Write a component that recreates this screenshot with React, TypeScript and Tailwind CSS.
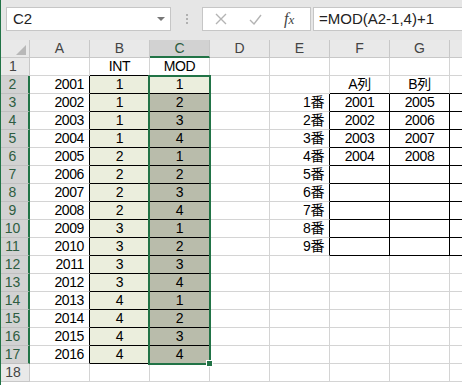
const COLS = ["A", "B", "C", "D", "E", "F", "G", "H"];
const ROWS = Array.from({ length: 18 }, (_, i) => i + 1);

function cellValue(col: string, r: number): string {
  if (col === "A" && r >= 2 && r <= 17) return String(1999 + r);
  if (col === "B") {
    if (r === 1) return "INT";
    if (r >= 2 && r <= 17) return String(Math.floor((r - 2) / 4) + 1);
  }
  if (col === "C") {
    if (r === 1) return "MOD";
    if (r >= 2 && r <= 17) return String(((r - 2) % 4) + 1);
  }
  if (col === "E" && r >= 3 && r <= 11) return `${r - 2}番`;
  if (col === "F") {
    if (r === 2) return "A列";
    if (r >= 3 && r <= 6) return String(1998 + r);
  }
  if (col === "G") {
    if (r === 2) return "B列";
    if (r >= 3 && r <= 6) return String(2002 + r);
  }
  return "";
}

function cellClass(col: string, r: number): string {
  const inBC = (col === "B" || col === "C") && r >= 2 && r <= 17;
  const inTable = (col === "F" || col === "G" || col === "H") && r >= 3 && r <= 11;
  const blackRight =
    inBC || inTable || (col === "A" && r >= 2 && r <= 17) || (col === "E" && r >= 3 && r <= 11);
  const blackBottom =
    inBC ||
    inTable ||
    ((col === "B" || col === "C") && r === 1) ||
    ((col === "F" || col === "G" || col === "H") && r === 2);

  let bg = "bg-white";
  if (col === "B" && inBC) bg = "bg-[#ebeedd]";
  if (col === "C" && r === 2) bg = "bg-[#ebeedd]";
  if (col === "C" && r >= 3 && r <= 17) bg = "bg-[#b9bcab]";

  const align = col === "A" || col === "E" ? "justify-end pr-[5px]" : "justify-center";

  return [
    "flex h-[18px] w-[60px] shrink-0 items-end border-r border-b pb-[1px] leading-[16px]",
    blackRight ? "border-r-black" : "border-r-[#d4d4d4]",
    blackBottom ? "border-b-black" : "border-b-[#d4d4d4]",
    bg,
    align,
  ].join(" ");
}

function Toolbar() {
  return (
    <div className="flex h-[40px] items-start bg-[#e6e6e6] pt-[7px] pl-[5px]">
      <div className="flex h-[24px] w-[165px] items-center justify-between border border-[#c6c6c6] bg-white pl-[6px] pr-[5px] text-[15px] text-[#222]">
        <span>C2</span>
        <svg width="8" height="5" viewBox="0 0 8 5">
          <path d="M0 0 L8 0 L4 4 Z" fill="#777" />
        </svg>
      </div>
      <div className="flex h-[24px] w-[31px] flex-col items-center justify-center gap-[2px]">
        <span className="h-[2px] w-[2px] bg-[#b0b0b0]" />
        <span className="h-[2px] w-[2px] bg-[#b0b0b0]" />
        <span className="h-[2px] w-[2px] bg-[#b0b0b0]" />
      </div>
      <div className="flex h-[24px] w-[109px] items-center border border-[#c6c6c6] bg-white">
        <svg className="ml-[12px]" width="12" height="12" viewBox="0 0 12 12">
          <path d="M1 1 L11 11 M11 1 L1 11" stroke="#b4b4b4" strokeWidth="1.4" />
        </svg>
        <svg className="ml-[22px]" width="13" height="11" viewBox="0 0 13 11">
          <path d="M1 6 L5 10 L12 1" stroke="#b4b4b4" strokeWidth="1.4" fill="none" />
        </svg>
        <span className="ml-[22px] font-['Liberation_Serif',serif] text-[16px] italic leading-none text-[#444]">
          f<span className="text-[13px]">x</span>
        </span>
      </div>
      <div className="ml-[2px] flex h-[24px] flex-1 items-center border border-r-0 border-[#c6c6c6] bg-white pl-[5px] text-[15px] text-[#222]">
        =MOD(A2-1,4)+1
      </div>
    </div>
  );
}

export default function App() {
  return (
    <div className="h-[385px] w-[462px] overflow-hidden border-l border-[#217346] bg-white font-['Liberation_Sans','Noto_Sans_CJK_JP',sans-serif]">
      <Toolbar />
      <div className="relative">
        <div className="flex">
          <div className="flex h-[18px] w-[29px] shrink-0 items-end justify-end border-r border-b border-[#c8c8c8] bg-[#e9e9e9] pr-[3px] pb-[2px]">
            <svg width="10" height="10" viewBox="0 0 10 10">
              <path d="M10 0 L10 10 L0 10 Z" fill="#b8b8b8" />
            </svg>
          </div>
          {COLS.map((c) => (
            <div
              key={c}
              className={
                c === "C"
                  ? "flex h-[18px] w-[60px] shrink-0 items-end justify-center border-r border-r-[#c8c8c8] border-b-2 border-b-[#217346] bg-[#d2d2d2] text-[14px] leading-[16px] text-[#2a5b3e]"
                  : "flex h-[18px] w-[60px] shrink-0 items-end justify-center border-r border-b border-[#c8c8c8] bg-[#e9e9e9] pb-[1px] text-[14px] leading-[16px] text-[#444]"
              }
            >
              {c === "H" ? "" : c}
            </div>
          ))}
        </div>
        {ROWS.map((r) => {
          const sel = r >= 2 && r <= 17;
          return (
            <div key={r} className="flex">
              <div
                className={
                  sel
                    ? "flex h-[18px] w-[29px] shrink-0 items-end justify-center border-r-2 border-r-[#217346] border-b border-b-[#c0c0c0] bg-[#d2d2d2] pb-[1px] pr-[4px] text-[14px] leading-[16px] text-[#2e5d41]"
                    : "flex h-[18px] w-[29px] shrink-0 items-end justify-center border-r border-b border-[#c8c8c8] bg-[#e9e9e9] pb-[1px] pr-[4px] text-[14px] leading-[16px] text-[#444]"
                }
              >
                {r}
              </div>
              {COLS.map((c) => (
                <div key={c} className={cellClass(c, r) + " text-[14px] tracking-[-0.4px] text-black"}>
                  {cellValue(c, r)}
                </div>
              ))}
            </div>
          );
        })}
        <div className="pointer-events-none absolute left-[147px] top-[35px] h-[290px] w-[63px] border-2 border-[#217346]" />
        <div className="pointer-events-none absolute left-[205px] top-[320px] h-[7px] w-[7px] border border-white bg-[#217346]" />
      </div>
    </div>
  );
}
